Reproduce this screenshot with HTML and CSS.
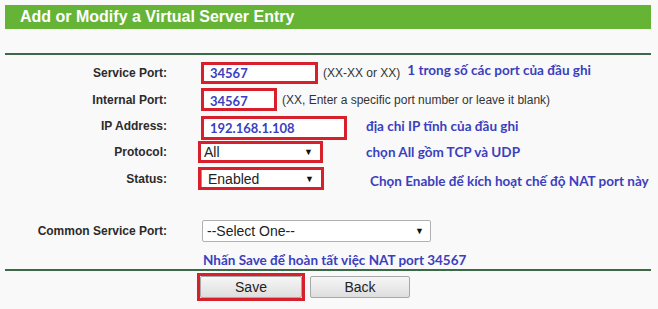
FILE: index.html
```html
<!DOCTYPE html>
<html lang="vi">
<head>
    <meta charset="UTF-8">
    <title>Add or Modify a Virtual Server Entry</title>
    <link rel="stylesheet" href="styles.css">
</head>
<body>
    <div class="page">
        <div class="title">Add or Modify a Virtual Server Entry</div>

        <div class="form">
            <div class="row">
                <label class="lbl">Service Port:</label>
                <div class="field">
                    <span class="mark mark-service"><input class="txt txt-service" value="34567" readonly></span>
                    <span class="hint">(XX-XX or XX)</span>
                    <span class="note note-service">1 trong số các port của đầu ghi</span>
                </div>
            </div>

            <div class="row">
                <label class="lbl">Internal Port:</label>
                <div class="field">
                    <span class="mark mark-internal"><input class="txt txt-internal" value="34567" readonly></span>
                    <span class="hint">(XX, Enter a specific port number or leave it blank)</span>
                </div>
            </div>

            <div class="row">
                <label class="lbl">IP Address:</label>
                <div class="field">
                    <span class="mark mark-ip"><input class="txt txt-ip" value="192.168.1.108" readonly></span>
                    <span class="note note-ip">địa chỉ IP tĩnh của đầu ghi</span>
                </div>
            </div>

            <div class="row">
                <label class="lbl">Protocol:</label>
                <div class="field">
                    <span class="mark mark-protocol">
                        <span class="sel">
                            <select class="drop drop-protocol">
                                <option>All</option>
                                <option>TCP</option>
                                <option>UDP</option>
                            </select>
                        </span>
                    </span>
                    <span class="note note-protocol">chọn All gồm TCP và UDP</span>
                </div>
            </div>

            <div class="row">
                <label class="lbl">Status:</label>
                <div class="field">
                    <span class="mark mark-status">
                        <span class="sel">
                            <select class="drop drop-status">
                                <option>Enabled</option>
                                <option>Disabled</option>
                            </select>
                        </span>
                    </span>
                    <span class="note note-status">Chọn Enable để kích hoạt chế độ NAT port này</span>
                </div>
            </div>

            <div class="row row-common">
                <label class="lbl">Common Service Port:</label>
                <div class="field">
                    <span class="sel">
                        <select class="drop drop-common">
                            <option>--Select One--</option>
                        </select>
                    </span>
                </div>
            </div>

            <div class="row row-save-note">
                <span></span>
                <div class="field">
                    <span class="note note-save">Nhấn Save để hoàn tất việc NAT port 34567</span>
                </div>
            </div>
        </div>

        <div class="actions">
            <span class="mark mark-save"><button class="btn btn-save">Save</button></span>
            <button class="btn btn-back">Back</button>
        </div>
    </div>
</body>
</html>
```

FILE: styles.css
```css
body {
    margin: 0;
    background-color: #f9f9f9;
    font-family: 'Liberation Sans', Arial, sans-serif;
    color: #222;
}

.page {
    width: 646px;
    padding: 5px 0 0 5px;
}

.title {
    height: 24px;
    line-height: 24px;
    padding-left: 15px;
    background-color: #66b436;
    color: #ffffff;
    font-size: 16px;
    font-weight: bold;
}

.form {
    margin-top: 24px;
    border-top: 2px solid #3c6a48;
    border-bottom: 2px solid #3c6a48;
    padding-top: 5px;
    display: flex;
    flex-direction: column;
}

.row {
    height: 26.4px;
    display: grid;
    grid-template-columns: 162px 1fr;
    column-gap: 31px;
    align-items: center;
}

.lbl {
    text-align: right;
    font-size: 12px;
    font-weight: bold;
    color: #2b2b2b;
}

.field {
    display: flex;
    align-items: center;
    gap: 5px;
    white-space: nowrap;
}

.hint {
    font-size: 12px;
    color: #333;
}

.note {
    font-family: Lato, 'Open Sans', sans-serif;
    font-weight: bold;
    font-size: 13.5px;
    color: #3b3fbf;
}

.note-service {
    margin-left: 2px;
    margin-top: -6px;
}

.note-ip {
    margin-left: 14px;
}

.note-protocol {
    margin-left: 38px;
}

.note-status {
    margin-left: 41px;
    margin-top: 4px;
}

.note-save {
    margin-left: 5px;
}

/* red boxes drawn round the fields */
.mark {
    display: inline-flex;
    border: 3px solid #d7202b;
}

.mark-service,
.mark-internal,
.mark-ip {
    margin-left: 3px;
}

.mark-ip {
    margin-top: 3px;
}

.txt {
    box-sizing: border-box;
    border: none;
    margin: 0;
    padding: 0 0 0 6px;
    background-color: #ffffff;
    font-family: Lato, 'Open Sans', sans-serif;
    font-weight: bold;
    font-size: 13px;
    color: #3b3fbf;
    outline: none;
}

.txt-service {
    width: 111px;
    height: 16px;
}

.txt-internal {
    width: 70px;
    height: 17px;
    padding-top: 2px;
}

.txt-ip {
    width: 140px;
    height: 18px;
}

.sel {
    position: relative;
    display: inline-flex;
}

.sel::after {
    content: "\25BC";
    position: absolute;
    right: 7px;
    top: 50%;
    transform: translateY(-50%);
    font-size: 9px;
    color: #111;
    pointer-events: none;
}

.drop {
    appearance: none;
    box-sizing: border-box;
    margin: 0;
    background-color: #ffffff;
    font-family: 'Liberation Sans', Arial, sans-serif;
    font-size: 14px;
    color: #222;
    border-radius: 0;
    outline: none;
}

.drop-protocol {
    width: 119px;
    height: 16px;
    border: none;
    padding: 0 0 0 3px;
}

.drop-status {
    width: 120px;
    height: 17px;
    border: none;
    border-left: 1px solid #999;
    padding: 0 0 0 6px;
}

.drop-common {
    width: 229px;
    height: 22px;
    border: 1px solid #b0b0b0;
    border-radius: 2px;
    padding: 0 0 0 4px;
    margin-left: 4px;
}

.row-common {
    margin-top: 26px;
}

.row-save-note {
    height: 18px;
    margin-top: 6.6px;
}

.actions {
    display: flex;
    align-items: center;
    gap: 5px;
    padding: 2px 0 0 192px;
}

.btn {
    box-sizing: border-box;
    height: 22px;
    margin: 0;
    border: 1px solid #a8a8a8;
    border-radius: 2px;
    background: linear-gradient(#f6f6f6, #dedede);
    font-family: 'Liberation Sans', Arial, sans-serif;
    font-size: 14px;
    color: #222;
}

.btn-save {
    width: 102px;
}

.btn-back {
    width: 100px;
}
```
